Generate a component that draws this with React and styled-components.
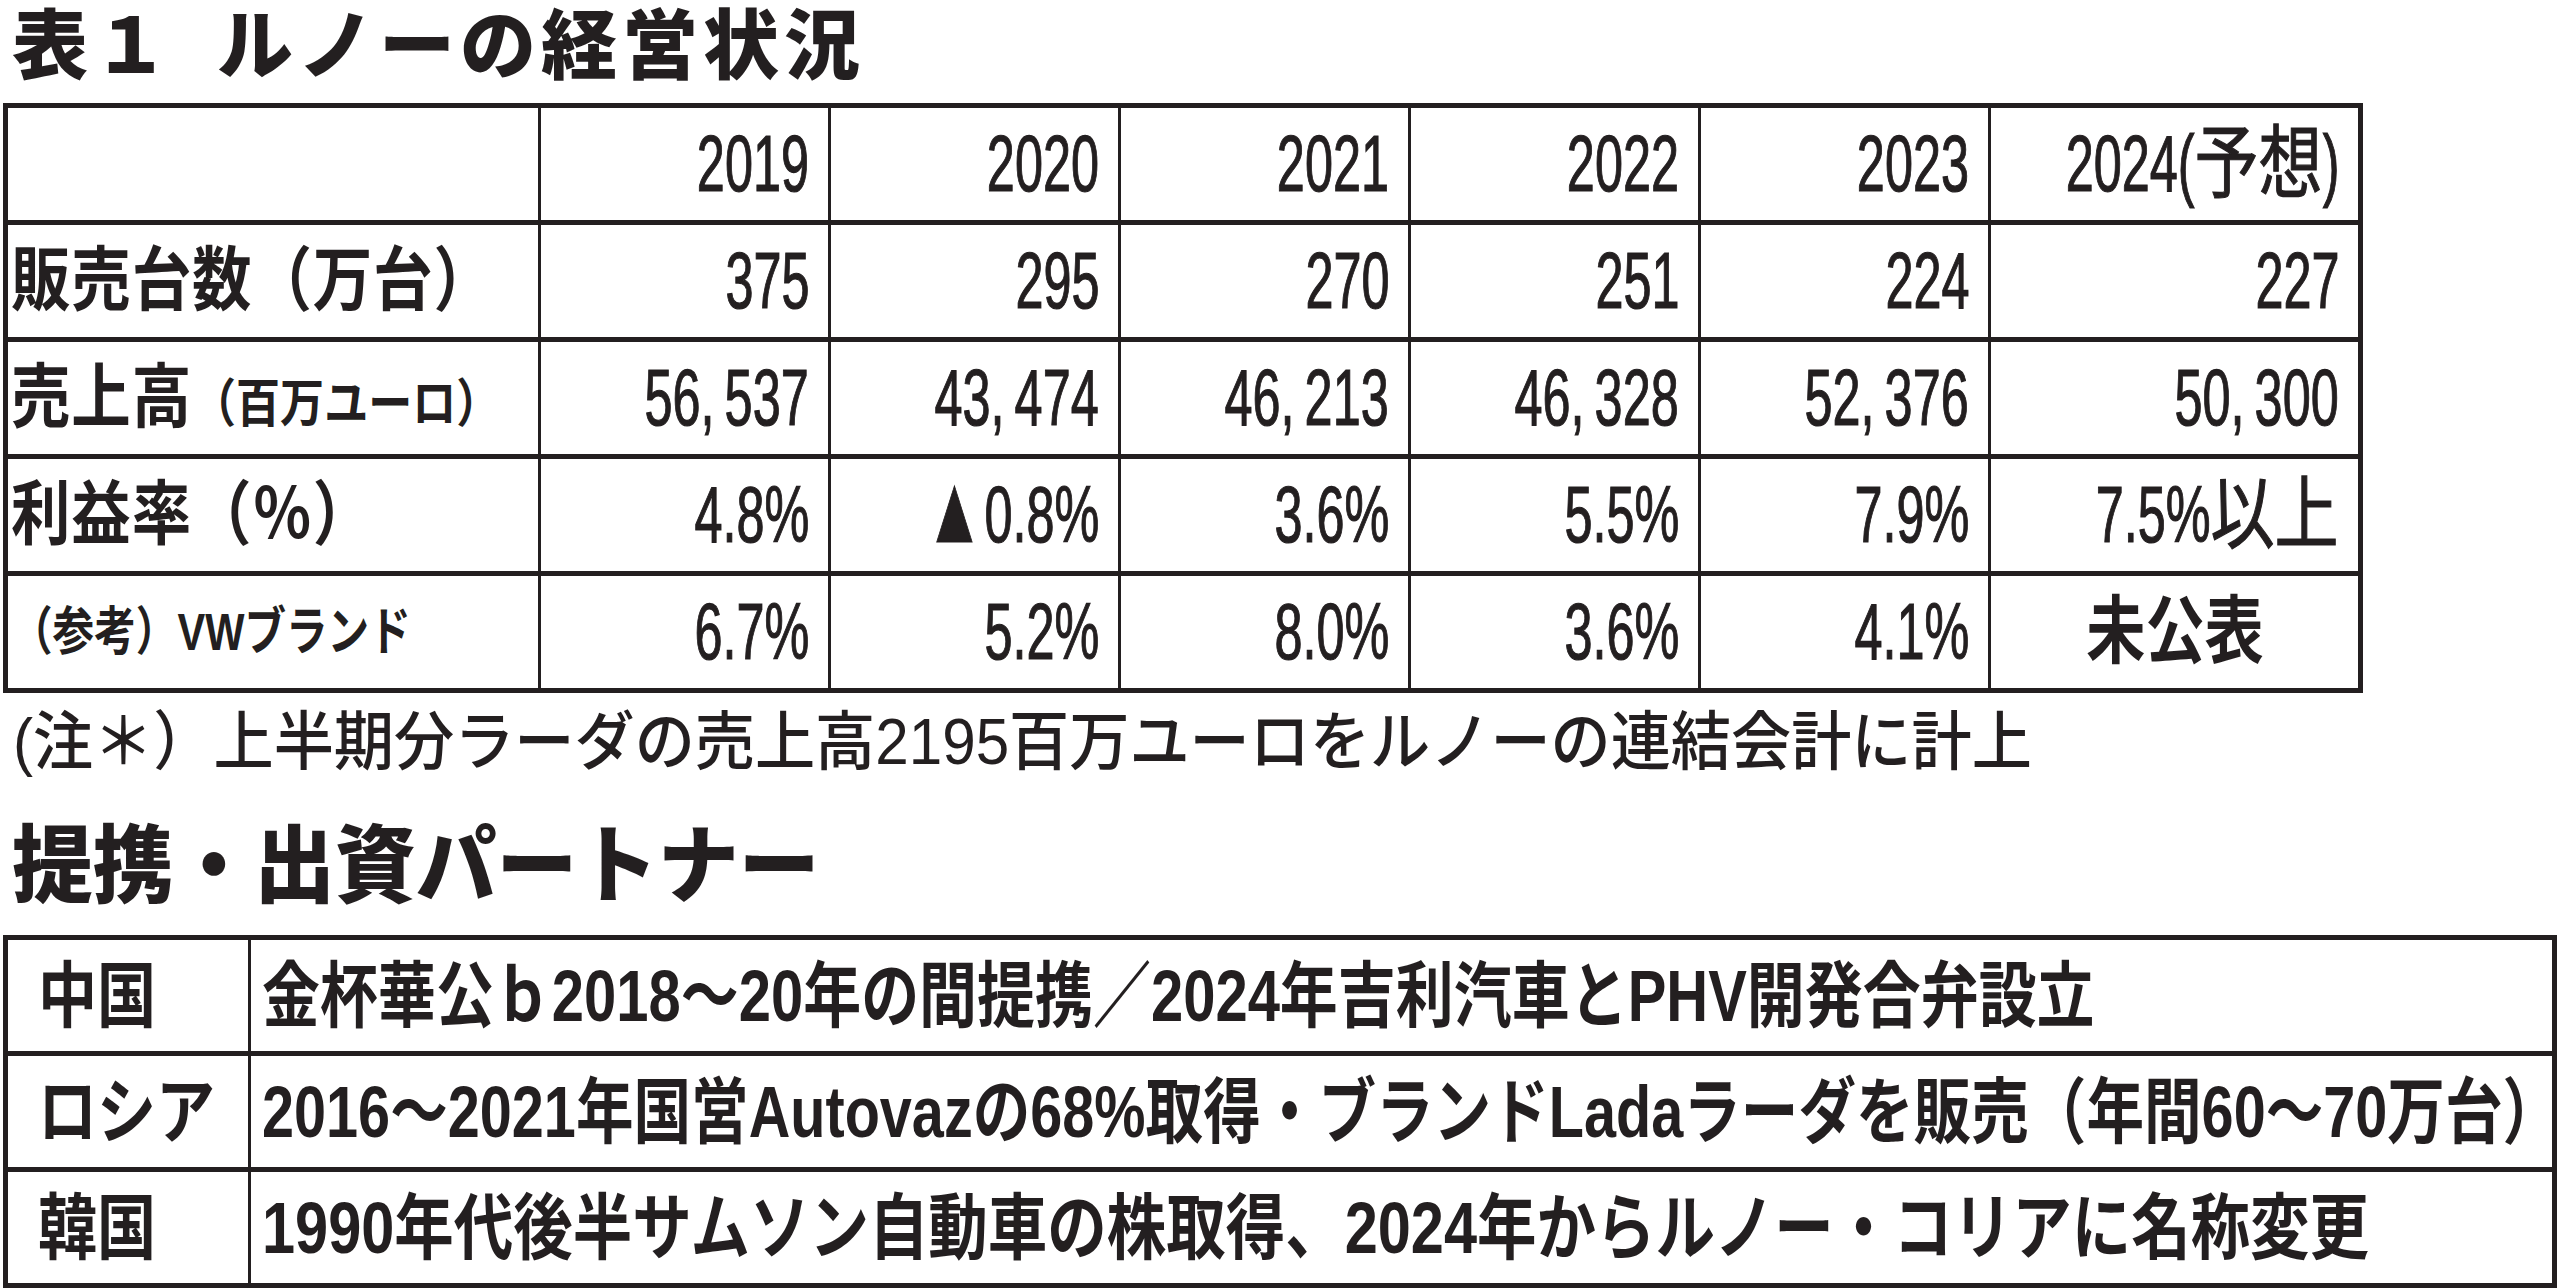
import React from "react";
import styled, { createGlobalStyle } from "styled-components";

const INK = "#231f20";
const STACK = `"Liberation Sans", "Noto Sans CJK JP", sans-serif`;

const GlobalStyle = createGlobalStyle`
  html, body {
    margin: 0;
    padding: 0;
    background: #fff;
    overflow: hidden;
  }

  body {
    font-family: ${STACK};
    color: ${INK};
  }
`;

const Page = styled.main`
  width: 2560px;
  height: 1288px;
  box-sizing: border-box;
  padding: 2px 0 0 3px;
  display: flex;
  flex-direction: column;
  align-items: flex-start;
`;

const Heading = styled.h2`
  margin: ${(p) => p.$gap}px 0 0 9px;
  font-family: ${STACK};
  font-weight: 900;
  font-size: ${(p) => p.$size}px;
  letter-spacing: ${(p) => p.$track || 0}px;
  line-height: 1;
  white-space: nowrap;
  transform: scaleX(${(p) => p.$sx || 1});
  transform-origin: left center;
`;

const Grid = styled.section`
  margin-top: ${(p) => p.$gap}px;
  width: ${(p) => p.$width}px;
  box-sizing: border-box;
  display: grid;
  grid-template-columns: ${(p) => p.$columns};
  grid-auto-rows: ${(p) => p.$row}px;
  gap: 5px 3px;
  padding: 5px;
  background: ${INK};
`;

const Cell = styled.div`
  background: #fff;
  display: flex;
  align-items: center;
  justify-content: ${(p) =>
    p.$align === "right" ? "flex-end" : p.$align === "center" ? "center" : "flex-start"};
  padding: 0 ${(p) => (p.$align === "right" ? 19 : 0)}px 0 ${(p) => p.$inset || 0}px;
  min-width: 0;
`;

const Squeeze = styled.span`
  display: inline-block;
  flex-shrink: 0;
  white-space: nowrap;
  line-height: 1;
`;

const Figure = styled(Squeeze)`
  font-size: 80px;
  font-weight: 400;
  -webkit-text-stroke: 1.2px ${INK};
  transform: scaleX(0.63);
  transform-origin: right center;
`;

const Sep = styled.span`
  margin-right: 0.2em;
`;

/* two full-width kanji inside a figure, set less condensed than the digits */
const Wide = styled.span`
  display: inline-block;
  margin: 0 0.27em;
  transform: scaleX(1.27);
`;

const Mark = styled.span`
  font-size: 1.2em;
  line-height: 0;
`;

const Label = styled(Squeeze)`
  font-size: ${(p) => (p.$small ? 52 : 70)}px;
  font-weight: 700;
  letter-spacing: ${(p) => (p.$small ? 0 : 1)}px;
  transform: scaleX(${(p) => (p.$small ? 0.8 : 0.85)});
  transform-origin: left center;
`;

const Aside = styled.span`
  font-size: 0.74em;
  letter-spacing: 0;
`;

const Pending = styled(Squeeze)`
  font-size: 74px;
  font-weight: 700;
  transform: scaleX(0.8);
  transform-origin: center;
`;

const Note = styled.p`
  margin: 17px 0 0 10px;
  font-size: 64px;
  font-weight: 500;
  line-height: 1;
  white-space: nowrap;
  transform: scaleX(0.94);
  transform-origin: left center;
`;

const Line = styled(Squeeze)`
  font-size: 72px;
  font-weight: 700;
  transform: scaleX(${(p) => p.$sx || 0.82});
  transform-origin: left center;
`;

const TITLE = "表１\u2002ルノーの経営状況";
const SUBTITLE = "提携・出資パートナー";
const NOTE = "(注＊）上半期分ラーダの売上高2195百万ユーロをルノーの連結会計に計上";

const years = ["2019", "2020", "2021", "2022", "2023", "2024(予想)"];

const results = [
  {
    label: "販売台数（万台）",
    values: ["375", "295", "270", "251", "224", "227"],
  },
  {
    label: (
      <>
        売上高<Aside>（百万ユーロ）</Aside>
      </>
    ),
    values: ["56,537", "43,474", "46,213", "46,328", "52,376", "50,300"],
  },
  {
    label: "利益率（％）",
    values: ["4.8%", "▲0.8%", "3.6%", "5.5%", "7.9%", "7.5%以上"],
  },
  {
    label: "（参考）VWブランド",
    small: true,
    values: ["6.7%", "5.2%", "8.0%", "3.6%", "4.1%", null],
  },
];

const partners = [
  {
    region: "中国",
    detail: "金杯華公ｂ2018～20年の間提携／2024年吉利汽車とPHV開発合弁設立",
    fit: 0.805,
  },
  {
    region: "ロシア",
    detail: "2016～2021年国営Autovazの68%取得・ブランドLadaラーダを販売（年間60～70万台）",
    fit: 0.8,
  },
  {
    region: "韓国",
    detail: "1990年代後半サムソン自動車の株取得、2024年からルノー・コリアに名称変更",
    fit: 0.826,
  },
];

// print figures: wide comma gap, larger triangle, kanji less condensed
function renderFigure(value) {
  const out = [];
  const re = /(,)|(▲)|(予想|以上)/g;
  let last = 0;
  let m;
  while ((m = re.exec(value))) {
    if (m.index > last) out.push(value.slice(last, m.index));
    if (m[1]) out.push(<Sep key={m.index}>,</Sep>);
    else if (m[2]) out.push(<Mark key={m.index}>▲</Mark>);
    else out.push(<Wide key={m.index}>{m[3]}</Wide>);
    last = m.index + m[0].length;
  }
  if (last < value.length) out.push(value.slice(last));
  return out;
}

function ResultsTable() {
  return (
    <Grid $gap={18} $width={2360} $columns="530px repeat(5, 287px) 1fr" $row={112}>
      <Cell />
      {years.map((year) => (
        <Cell key={year} $align="right">
          <Figure>{renderFigure(year)}</Figure>
        </Cell>
      ))}

      {results.map((row, r) => (
        <React.Fragment key={r}>
          <Cell $inset={3}>
            <Label $small={row.small}>{row.label}</Label>
          </Cell>
          {row.values.map((value, i) =>
            value === null ? (
              <Cell key={i} $align="center">
                <Pending>未公表</Pending>
              </Cell>
            ) : (
              <Cell key={i} $align="right">
                <Figure>{renderFigure(value)}</Figure>
              </Cell>
            )
          )}
        </React.Fragment>
      ))}
    </Grid>
  );
}

function PartnerTable() {
  return (
    <Grid $gap={26} $width={2554} $columns="240px 1fr" $row={111}>
      {partners.map((p) => (
        <React.Fragment key={p.region}>
          <Cell $inset={30}>
            <Line>{p.region}</Line>
          </Cell>
          <Cell $inset={11}>
            <Line $sx={p.fit}>{p.detail}</Line>
          </Cell>
        </React.Fragment>
      ))}
    </Grid>
  );
}

export default function App() {
  return (
    <>
      <GlobalStyle />
      <Page>
        <Heading $gap={7} $size={76} $track={5}>
          {TITLE}
        </Heading>
        <ResultsTable />
        <Note>{NOTE}</Note>
        <Heading $gap={50} $size={85} $sx={0.95}>
          {SUBTITLE}
        </Heading>
        <PartnerTable />
      </Page>
    </>
  );
}
